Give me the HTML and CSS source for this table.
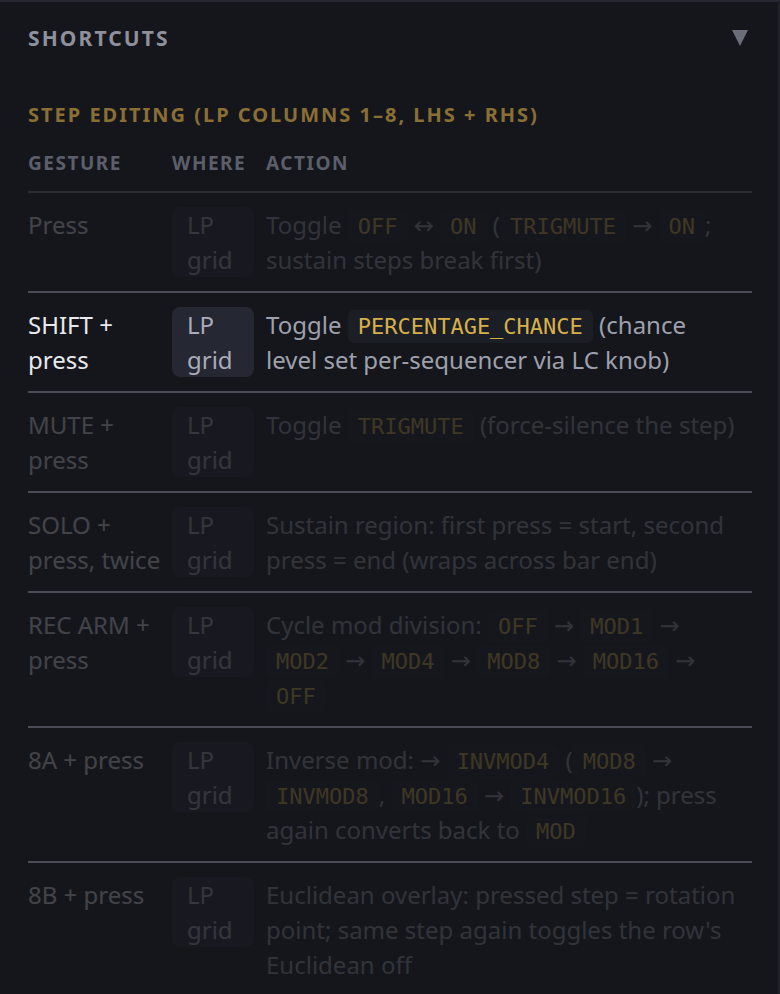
FILE: index.html
```html
<!DOCTYPE html>
<html lang="en">
<head>
  <meta charset="UTF-8">
  <title>Shortcuts</title>
  <link rel="stylesheet" href="styles.css">
</head>
<body>
  <section class="panel">
    <header class="panel-head">
      <h2>SHORTCUTS</h2>
      <svg class="caret" width="16" height="16" viewBox="0 0 16 16"><polygon points="0,0 16,0 8,16" fill="#6b6e7a"/></svg>
    </header>

    <h3 class="group-title">STEP EDITING (LP COLUMNS 1–8, LHS + RHS)</h3>

    <div class="table">
      <div class="row head">
        <div>GESTURE</div>
        <div>WHERE</div>
        <div>ACTION</div>
      </div>

      <div class="row dim">
        <div class="gesture">Press</div>
        <div class="where">LP grid</div>
        <div class="action">Toggle <code>OFF</code> ↔ <code>ON</code> (<code>TRIGMUTE</code> → <code>ON</code>; sustain steps break first)</div>
      </div>

      <div class="row">
        <div class="gesture">SHIFT + press</div>
        <div class="where">LP grid</div>
        <div class="action">Toggle <code>PERCENTAGE_CHANCE</code> (chance level set per-sequencer via LC knob)</div>
      </div>

      <div class="row dim">
        <div class="gesture">MUTE + press</div>
        <div class="where">LP grid</div>
        <div class="action">Toggle <code>TRIGMUTE</code> (force-silence the step)</div>
      </div>

      <div class="row dim">
        <div class="gesture">SOLO + press, twice</div>
        <div class="where">LP grid</div>
        <div class="action">Sustain region: first press = start, second press = end (wraps across bar end)</div>
      </div>

      <div class="row dim">
        <div class="gesture">REC ARM + press</div>
        <div class="where">LP grid</div>
        <div class="action">Cycle mod division: <code>OFF</code> → <code>MOD1</code> → <code>MOD2</code> → <code>MOD4</code> → <code>MOD8</code> → <code>MOD16</code> → <code>OFF</code></div>
      </div>

      <div class="row dim">
        <div class="gesture">8A + press</div>
        <div class="where">LP grid</div>
        <div class="action">Inverse mod: → <code>INVMOD4</code> (<code>MOD8</code> → <code>INVMOD8</code>, <code>MOD16</code> → <code>INVMOD16</code>); press again converts back to <code>MOD</code></div>
      </div>

      <div class="row dim">
        <div class="gesture">8B + press</div>
        <div class="where">LP grid</div>
        <div class="action">Euclidean overlay: pressed step = rotation point; same step again toggles the row's Euclidean off</div>
      </div>
    </div>
  </section>
</body>
</html>
```

FILE: styles.css
```css
body {
  margin: 0;
  background: #15161b;
  font-family: "Noto Sans", "DejaVu Sans", sans-serif;
}
.panel {
  background: #15161b;
  border-top: 2px solid #272832;
  border-right: 2px solid #202128;
  padding: 0 26px 0 28px;
}
.panel-head {
  height: 72px;
  display: flex;
  align-items: center;
  justify-content: space-between;
}
.panel-head h2 {
  margin: 0;
  font-size: 21px;
  font-weight: 700;
  letter-spacing: 0.1em;
  color: #8e909c;
}
.caret {
  margin-right: 4px;
}
.group-title {
  margin: 29px 0 0;
  font-size: 20px;
  line-height: 24px;
  font-weight: 700;
  letter-spacing: 0.1em;
  color: #8a6f35;
}
.table {
  margin-top: 24px;
}
.row {
  display: grid;
  grid-template-columns: 144px 94px 1fr;
  padding: 14px 0;
  border-bottom: 2px solid #4a4c58;
  font-size: 24px;
  line-height: 35px;
}
.row.head {
  padding: 0 0 16px;
  border-bottom-color: #2a2c36;
  font-size: 19px;
  line-height: 24px;
  font-weight: 700;
  letter-spacing: 0.08em;
  color: #5c5f6b;
}
.gesture {
  color: #e8e9ed;
  padding-right: 8px;
}
.where {
  width: 82px;
  box-sizing: border-box;
  background: #252733;
  border-radius: 8px;
  padding: 0 14px 0 15px;
  color: #a9abb8;
  align-self: start;
}
.action {
  color: #9ea1ad;
  padding-right: 12px;
}
.action code {
  font-family: "DejaVu Sans Mono", monospace;
  font-size: 22px;
  line-height: 1;
  color: #d6b04b;
  background: #1c1e26;
  border-radius: 6px;
  padding: 4px 10px;
}
.row.dim > div {
  opacity: 0.21;
}
```
